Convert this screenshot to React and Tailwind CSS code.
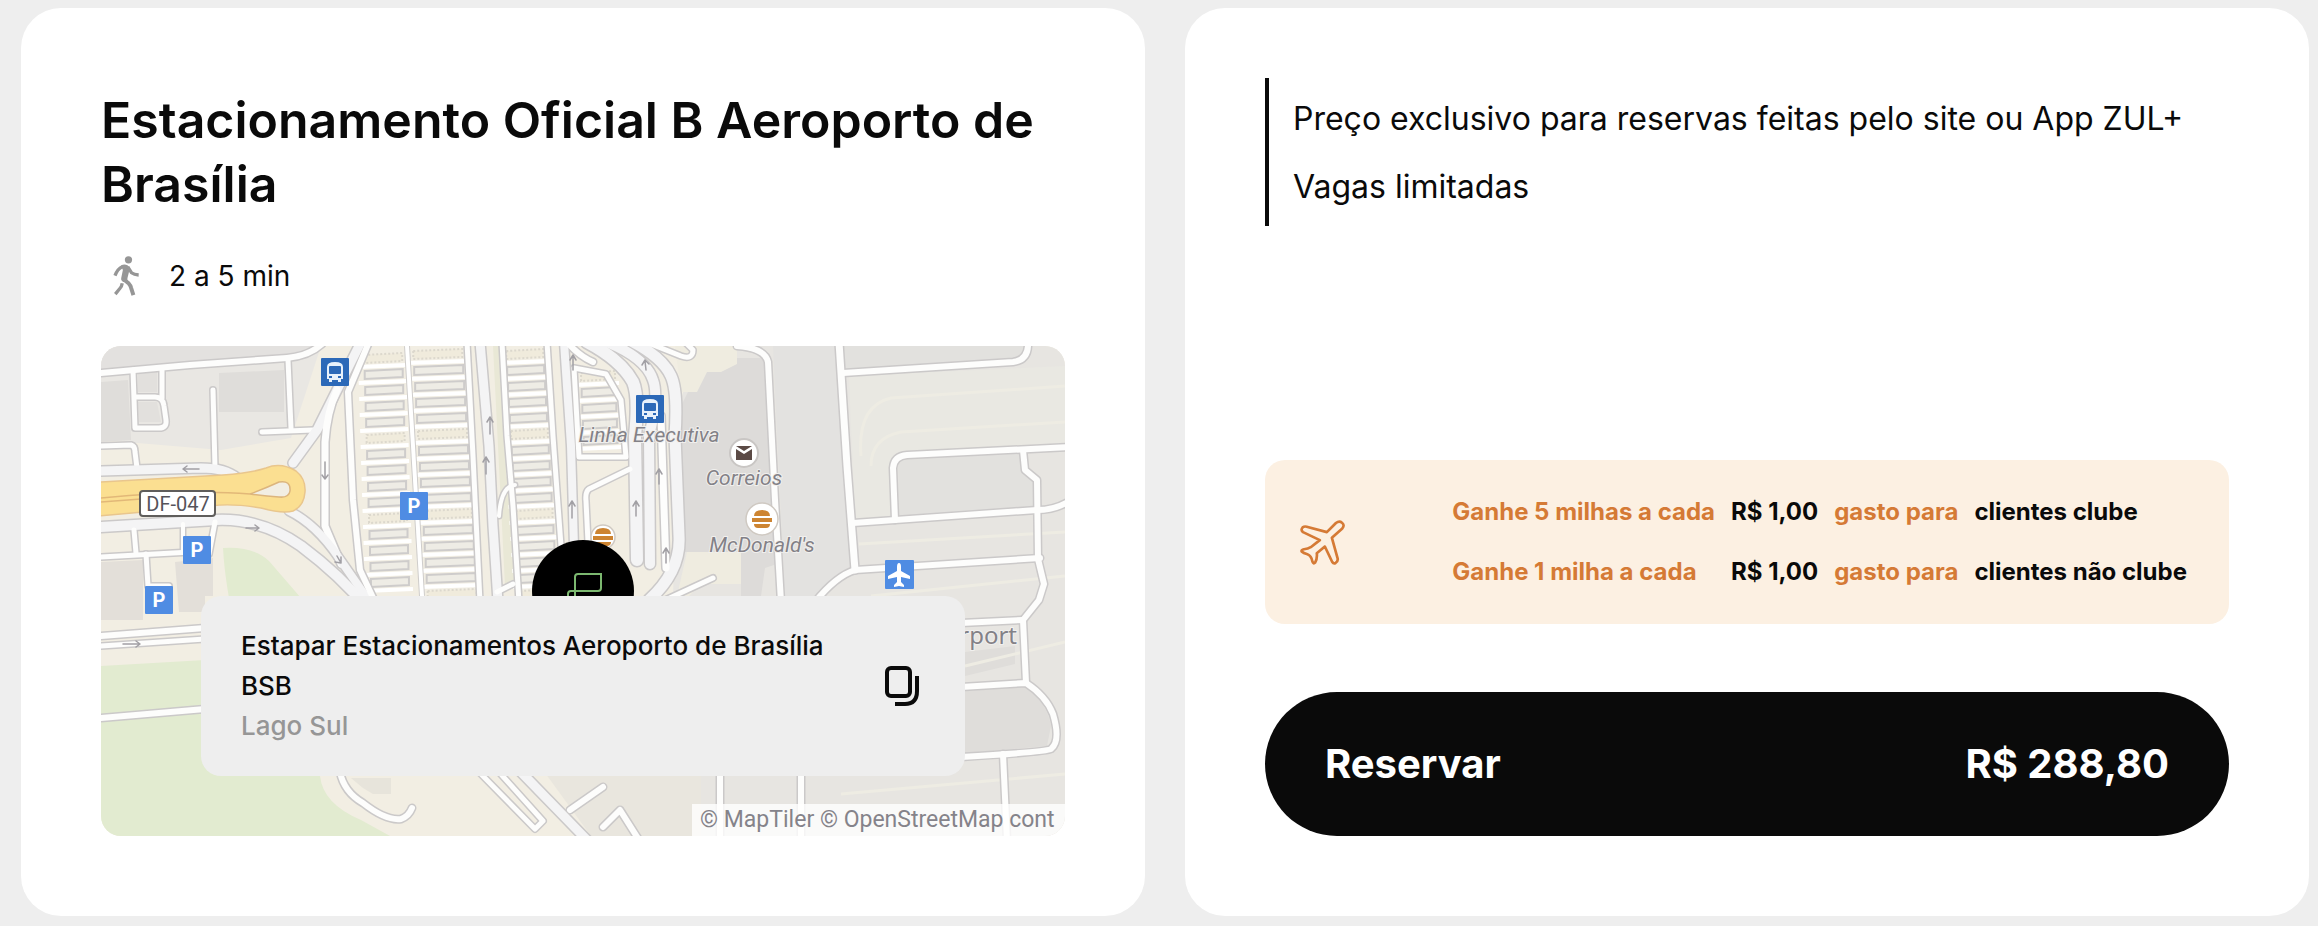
const MILES = [
  { earn: 'Ganhe 5 milhas a cada', amount: 'R$ 1,00', who: 'clientes clube' },
  { earn: 'Ganhe 1 milha a cada', amount: 'R$ 1,00', who: 'clientes não clube' }
];

// [path, width]
const ROADS = [
  ['M0 27 L89 19 L186 12 Q208 10 221 -2', 6],
  ['M32 24 L34 82 H58 Q66 82 65 74 L63 60 Q62 51 54 51 H34', 5],
  ['M61 22 V52', 5],
  ['M112 44 L114 122', 5],
  ['M187 14 L190 82', 5],
  ['M161 86 L212 84', 5],
  ['M0 100 L30 99 Q34 100 34 106 L36 122', 5],
  ['M0 125 L100 122 Q124 122 136 132', 9],
  ['M262 -8 L236 44 L216 84 L192 117', 9],
  ['M236 44 Q226 66 224 96 L224 180 L240 218', 7],
  ['M0 181 L115 174 Q160 172 200 200 Q240 230 266 262', 10],
  ['M188 165 Q215 178 238 212 L266 252', 8],
  ['M33 184 L35 207', 5],
  ['M82 178 V206', 4],
  ['M114 176 L108 208', 5],
  ['M0 211 L90 206', 5],
  ['M45 208 L47 240 H68', 5],
  ['M0 290 L104 282', 6],
  ['M0 300 L104 293', 5],
  ['M0 372 L104 363', 6],
  ['M268 -4 L247 46 L252 154 L259 224 L274 256', 6],
  ['M366 -4 L372 110 L379 256', 5],
  ['M379 -4 L388 100 L392 180 L397 256', 9],
  ['M401 -4 L406 90 L412 160 L418 256', 5],
  ['M446 -4 L452 90 L460 200', 5],
  ['M463 -4 L470 100 L473 200', 8],
  ['M473 22 L478 111 H525 L520 54 L505 28 Z', 5],
  ['M466 -4 Q478 10 492 16', 6],
  ['M486 -4 Q520 14 532 36 Q538 50 534 90 L536 214', 12],
  ['M506 -4 Q545 12 552 34 Q558 50 548 90 L549 218', 10],
  ['M532 -4 Q562 12 570 30 Q577 45 574 90 L578 190 Q580 225 548 254', 11],
  ['M560 70 L565 222', 7],
  ['M545 -4 L580 10 Q592 14 592 4 L584 -4', 5],
  ['M529 123 L488 143 Q484 146 485 155 L487 196', 5],
  ['M396 246 L412 238', 5],
  ['M398 170 Q400 140 414 139', 4],
  ['M560 256 L612 232', 5],
  ['M636 0 Q664 2 667 16 L674 154 L680 256', 6],
  ['M738 -4 L746 120 L754 224', 7],
  ['M742 27 L912 16 Q928 14 927 -4', 6],
  ['M752 177 L936 164 Q955 164 970 154', 6],
  ['M794 174 L792 122 Q793 110 806 109 L970 101', 6],
  ['M922 104 L924 124 L936 134 L937 213 L943 238 L938 254 L922 274 L925 337', 6],
  ['M714 256 Q735 230 754 224 L939 212', 6],
  ['M860 277 L922 274', 6],
  ['M860 341 L925 337 Q945 350 952 368 Q960 395 950 403 Q945 406 860 411', 6],
  ['M902 408 L906 494', 6],
  ['M619 420 V494', 6],
  ['M700 420 V494', 6],
  ['M239 426 Q243 446 262 457 Q285 475 300 473 Q308 470 311 462', 6],
  ['M378 426 L434 483 L442 475 L398 426', 5],
  ['M418 424 L486 494', 9],
  ['M469 464 L502 441', 6],
  ['M502 481 L519 464 L538 494', 6]
];

const ARROWS = [
  'M98 123 H82 M86 120 L82 123 L86 126',
  'M145 182 H157 M154 179 L158 182 L154 185',
  'M224 116 V132 M221 129 L224 133 L227 129',
  'M236 210 L240 217 M234 216 L240 217 L240 211',
  'M389 88 V72 M386 76 L389 71 L392 76',
  'M385 128 V112 M382 116 L385 111 L388 116',
  'M472 24 V10 M469 14 L472 9 L475 14',
  'M471 172 V156 M468 160 L471 155 L474 160',
  'M535 170 V156 M532 160 L535 155 L538 160',
  'M558 138 V124 M555 128 L558 123 L561 128',
  'M565 217 V203 M562 207 L565 202 L568 207',
  'M545 24 L544 15 M541 19 L544 14 L548 18',
  'M22 298 H39 M35 295 L39 298 L35 301'
];

const LOTS = [
  { x: 263, width: 38, top: 8, rows: 15, lean: 0.03 },
  { x: 312, width: 49, top: 4, rows: 16, lean: 0.06 },
  { x: 405, width: 37, top: 4, rows: 16, lean: 0.058 },
  { x: 479, width: 34, top: 26, rows: 5, lean: 0.04 }
];

function ParkingLot({ x, width, top, rows, lean }) {
  return Array.from({ length: rows }, (_, i) => {
    const y = top + i * 16;
    const left = x + y * lean;
    const dotted = i % 5 === 0;
    return (
      <g key={y}>
        <path d={`M${left - 6} ${y + 13} L${left + width + 4} ${y + 11}`} stroke="#fff" strokeWidth="4" />
        <path
          d={`M${left} ${y + 1} L${left + width} ${y - 1} V${y + 7} L${left} ${y + 9} Z`}
          fill={dotted ? '#f0ebdc' : '#eeece5'}
          stroke={dotted ? '#dcd8cd' : '#cecccb'}
          strokeWidth="2"
          strokeDasharray={dotted ? '2 2' : undefined}
        />
      </g>
    );
  });
}

function ParkingPin({ x, y }) {
  return (
    <g>
      <rect x={x - 14} y={y - 14} width="28" height="28" rx="1" fill="#4f8ce3" />
      <text x={x} y={y + 7} textAnchor="middle" fontSize="20" fontWeight="700" fill="#fff" fontFamily="Roboto, sans-serif">P</text>
    </g>
  );
}

function BusPin({ x, y }) {
  return (
    <g transform={`translate(${x - 14} ${y - 14})`}>
      <rect width="28" height="28" rx="1" fill="#2c69b8" />
      <path d="M6 9 Q6 4 14 4 Q22 4 22 9 V21 H20 V24 H17 V22 H11 V24 H8 V21 H6 Z" fill="#e8f1fb" />
      <rect x="8" y="8" width="12" height="8" rx="1" fill="#2c69b8" />
      <path d="M8 19 H11 M17 19 H20" stroke="#2c69b8" strokeWidth="2" />
    </g>
  );
}

function BurgerPin({ x, y, r }) {
  return (
    <g>
      <circle cx={x} cy={y} r={r} fill="#fff" stroke="#cfc9c2" strokeWidth="1.5" />
      <path
        d={`M${x - 8} ${y - 3} Q${x - 8} ${y - 9} ${x} ${y - 9} Q${x + 8} ${y - 9} ${x + 8} ${y - 3} Z M${x - 10} ${y - 1} H${x + 10} V${y + 3} H${x - 10} Z M${x - 8} ${y + 5} H${x + 8} Q${x + 8} ${y + 9} ${x + 4} ${y + 9} H${x - 4} Q${x - 8} ${y + 9} ${x - 8} ${y + 5} Z`}
        fill="#cd8431"
      />
    </g>
  );
}

function MapDrawing() {
  return (
    <svg viewBox="0 0 964 490" preserveAspectRatio="xMidYMid slice" className="block h-full w-full" aria-hidden="true">
      <rect width="964" height="490" fill="#f2eee3" />

      {/* Ground */}
      <path d="M0 0 H220 L190 92 L120 104 L0 94 Z" fill="#e9e7e3" />
      <path d="M0 0 H215 L186 9 L0 24 Z" fill="#e3e1df" />
      <path d="M0 36 L27 34 L30 94 L0 96 Z M118 27 L183 24 V66 H118 Z" fill="#dfddda" />
      <path d="M37 24 H56 V46 H37 Z M37 56 H56 L60 76 H38 Z" fill="#e2e0dd" />
      <path d="M0 216 L42 214 V274 H0 Z M74 216 L112 212 V250 H104 V266 H78 Z" fill="#e3dfd9" />
      <path d="M122 202 Q152 200 168 215 L200 252 L219 430 Q222 458 260 474 L289 490 H0 V320 L104 314 L136 290 Q124 240 122 202 Z" fill="#e2ebd0" />
      <path d="M392 0 H400 L416 240 H404 Z" fill="#e9e8d6" />
      <path d="M596 0 H964 V490 H560 L572 250 L578 60 Z" fill="#e7e5e1" />
      <path d="M590 40 L608 16 L632 12 H664 L672 154 L676 218 L664 222 L660 250 H640 V206 H580 V60 Z" fill="#dddbd9" />
      <path d="M574 0 H636 V18 L620 26 H606 L596 46 H580 Z M586 206 H640 V238 H600 L588 250 H576 Z" fill="#efece0" />
      <path d="M672 0 H736 L752 224 L712 256 H684 Z" fill="#e3e2e0" />
      <path d="M742 0 H924 V10 L914 14 L742 24 Z M797 118 Q798 112 808 111 L920 107 L922 128 L934 136 V162 L798 172 Z" fill="#e2e1de" />
      <path d="M748 30 L964 20 V98 L800 106 Q788 108 789 122 L790 172 L754 175 Z" fill="#e9e8e2" />
      <path d="M864 306 L914 300 V318 L864 330 Z M864 345 L924 341 Q946 356 950 380 L946 400 L864 407 Z" fill="#dfddda" />
      <path d="M442 424 H600 V490 H490 Z" fill="#e9e6de" />
      <path d="M250 432 H290 V448 H272 L262 442 Z" fill="#e7e4db" />
      <g fill="none" stroke="#eeece3" strokeWidth="3">
        <path d="M760 110 Q756 60 790 52 L964 40 M770 120 Q770 92 800 86 L964 76 M758 198 L964 186 M770 250 L964 230" />
        <path d="M864 320 L964 296 M740 448 L964 428" />
      </g>

      {LOTS.map((lot) => (
        <ParkingLot key={lot.x} {...lot} />
      ))}
      <path d="M306 0 L321 250" stroke="#cfcdcb" strokeWidth="6" />
      <path d="M306 0 L321 250" stroke="#fff" strokeWidth="4" />

      {/* Roads: casing first, surface on top */}
      <g fill="none" strokeLinecap="round" strokeLinejoin="round">
        {ROADS.map(([d, width]) => (
          <path key={d} d={d} stroke="#cbc9c9" strokeWidth={width + 3} />
        ))}
        {ROADS.map(([d, width]) => (
          <path key={d} d={d} stroke={width > 7 ? '#f4f4f5' : '#fdfdfc'} strokeWidth={width} />
        ))}
        {ARROWS.map((d) => (
          <path key={d} d={d} stroke="#a19fa4" strokeWidth="1.5" />
        ))}
      </g>

      {/* Highway */}
      <path
        d="M-2 136 L122 129 Q150 127 165 122 Q180 116 195 125 Q205 133 204 146 Q203 160 192 165 Q182 168 160 162 Q130 157 110 160 L-2 170 Z"
        fill="#fbdf91"
        stroke="#e9c68d"
        strokeWidth="1.5"
      />
      <path
        d="M149 148 Q165 142 178 136 Q190 134 189 145 Q188 152 178 151 Q165 150 149 148 Z"
        fill="#f2eee3"
        stroke="#dcb57d"
        strokeWidth="1.5"
      />
      <path d="M0 152 Q90 143 149 148 M0 156 L40 153" fill="none" stroke="#e2b878" strokeWidth="1.5" />
      <rect x="39" y="145" width="75" height="25" rx="3" fill="#fff" stroke="#5f5d5b" strokeWidth="2" />
      <text x="77" y="165" textAnchor="middle" fontSize="20" fill="#55535a" fontFamily="Roboto, sans-serif">DF-047</text>

      {/* Pins */}
      <BusPin x={234} y={26} />
      <BusPin x={549} y={63} />
      <ParkingPin x={96} y={204} />
      <ParkingPin x={58} y={254} />
      <ParkingPin x={313} y={160} />
      <BurgerPin x={502} y={191} r={12} />
      <BurgerPin x={661} y={173} r={16} />
      <circle cx="643" cy="107" r="14" fill="#fff" stroke="#c9c6c4" strokeWidth="2" />
      <path d="M635 100 H651 L643 105 Z M635 103 L643 108 L651 103 V114 H635 Z" fill="#5b4a45" />
      <rect x="784" y="214" width="29" height="29" rx="1" fill="#4f8ce3" />
      <path
        d="M798 217 Q800 217 800 221 V225 L809 230 V233 L800 231 V236 L803 239 V241 L798 240 L793 241 V239 L796 236 V231 L787 233 V230 L796 225 V221 Q796 217 798 217 Z"
        fill="#fff"
      />

      <g fill="#838187" stroke="#f1f0ee" strokeWidth="2" paintOrder="stroke" fontFamily="Roboto, sans-serif">
        <g fontSize="21" fontStyle="italic" textAnchor="middle">
          <text x="548" y="96">Linha Executiva</text>
          <text x="643" y="139">Correios</text>
          <text x="661" y="206">McDonald's</text>
        </g>
        <text x="916" y="298" fontSize="24" textAnchor="end" fontFamily="'Noto Sans', sans-serif">rport</text>
      </g>

      {/* Estapar marker */}
      <circle cx="482" cy="245" r="51" fill="#000" />
      <path
        d="M474 254 V231 Q474 228 477 228 H500 V242 Q500 245 497 245 H470 Q467 245 467 248 V256"
        fill="none"
        stroke="#7cb870"
        strokeWidth="2"
      />
    </svg>
  );
}

function WalkIcon() {
  return (
    <svg width="26" height="40" viewBox="0 0 79 120" fill="none" stroke="#969696" strokeWidth="10" aria-hidden="true">
      <circle cx="47" cy="11" r="11" fill="#969696" stroke="none" />
      <path d="M24 28 Q34 22 44 27 Q50 30 51 38 L44 66 Q42 72 46 76 L32 78 Q23 74 25 66 L30 42 Z" fill="#969696" stroke="none" />
      <path d="M28 32 Q14 38 6 59" />
      <path d="M45 32 L56 50 Q64 56 78 57" />
      <path d="M32 70 L48 83 Q53 88 55 96 L62 118" strokeWidth="12" />
      <path d="M28 82 Q27 92 20 99 L7 115" />
    </svg>
  );
}

function CopyIcon() {
  return (
    <svg width="34" height="40" viewBox="0 0 34 40" fill="none" stroke="#0a0a0a" strokeWidth="4" aria-hidden="true">
      <rect x="2" y="2" width="23" height="28" rx="4" />
      <path d="M32 10 V25 Q32 38 20 38 H10" />
    </svg>
  );
}

function PlaneIcon() {
  return (
    <svg width="45" height="45" viewBox="0 0 134 134" fill="none" stroke="#d57a35" strokeWidth="8" strokeLinejoin="round" aria-hidden="true">
      <path d="M107 9 Q117 1 125 8 Q134 15 126 25 L95 53 L112 114 Q114 123 106 128 Q100 131 96 125 L74 79 L50 99 Q52 114 45 127 Q40 132 37 124 Q34 106 22 102 Q10 99 5 94 Q3 89 12 87 Q24 86 32 81 L59 60 L9 36 Q1 30 8 22 Q13 18 20 20 L80 36 Z" />
    </svg>
  );
}

export default function App() {
  return (
    <main className="grid min-h-screen grid-cols-2 gap-10 bg-[#eeeeee] pt-2 pr-[9px] pb-[10px] pl-[21px] font-['Inter',sans-serif] text-[#0a0a0a]">
      {/* Parking lot */}
      <section className="flex flex-col rounded-[40px] bg-white p-20">
        <h1 className="text-[50px] leading-[64px] font-semibold">Estacionamento Oficial B Aeroporto de Brasília</h1>
        <div className="mt-10 mb-[50px] flex h-10 items-center gap-[30px] pl-3">
          <WalkIcon />
          <p className="text-[28px]">2 a 5 min</p>
        </div>
        <div className="relative h-[490px] overflow-hidden rounded-[20px]">
          <MapDrawing />
          <p className="absolute right-0 bottom-0 h-8 w-[373px] bg-white/80 pl-2 font-['Roboto',sans-serif] text-[23px] leading-8 whitespace-nowrap text-[#85838a]">
            © MapTiler © OpenStreetMap cont
          </p>
          <div className="absolute inset-x-[100px] top-[250px] flex items-center justify-between rounded-[20px] bg-[#eeeeee] py-[30px] pr-[46px] pl-10">
            <address className="w-[600px] text-[26px] leading-10 font-medium not-italic">
              <p>Estapar Estacionamentos Aeroporto de Brasília BSB</p>
              <p className="text-[#969696]">Lago Sul</p>
            </address>
            <button type="button" aria-label="Copiar endereço">
              <CopyIcon />
            </button>
          </div>
        </div>
      </section>

      {/* Booking */}
      <section className="flex flex-col rounded-[40px] bg-white px-20 pt-[70px] pb-20">
        <div className="flex h-[148px] flex-col gap-5 border-l-4 border-[#0a0a0a] pt-[17px] pl-6 text-[32px] leading-[48px]">
          <p>Preço exclusivo para reservas feitas pelo site ou App ZUL+</p>
          <p>Vagas limitadas</p>
        </div>

        <div className="mt-auto flex h-[164px] items-center justify-between rounded-[20px] bg-[#fcf0e2] pr-[42px] pl-[35px]">
          <PlaneIcon />
          <div className="grid grid-cols-[repeat(4,auto)] gap-x-4 gap-y-6 text-2xl leading-9 font-bold">
            {MILES.map((row) => (
              <p key={row.earn} className="contents">
                <span className="text-[#d57a35]">{row.earn}</span>
                <span>{row.amount}</span>
                <span className="text-[#d57a35]">gasto para</span>
                <span>{row.who}</span>
              </p>
            ))}
          </div>
        </div>

        <button
          type="button"
          className="mt-[68px] flex h-36 items-center justify-between rounded-full bg-[#0a0a0a] px-[60px] text-[40px] font-bold text-white"
        >
          <span>Reservar</span>
          <span>R$ 288,80</span>
        </button>
      </section>
    </main>
  );
}
